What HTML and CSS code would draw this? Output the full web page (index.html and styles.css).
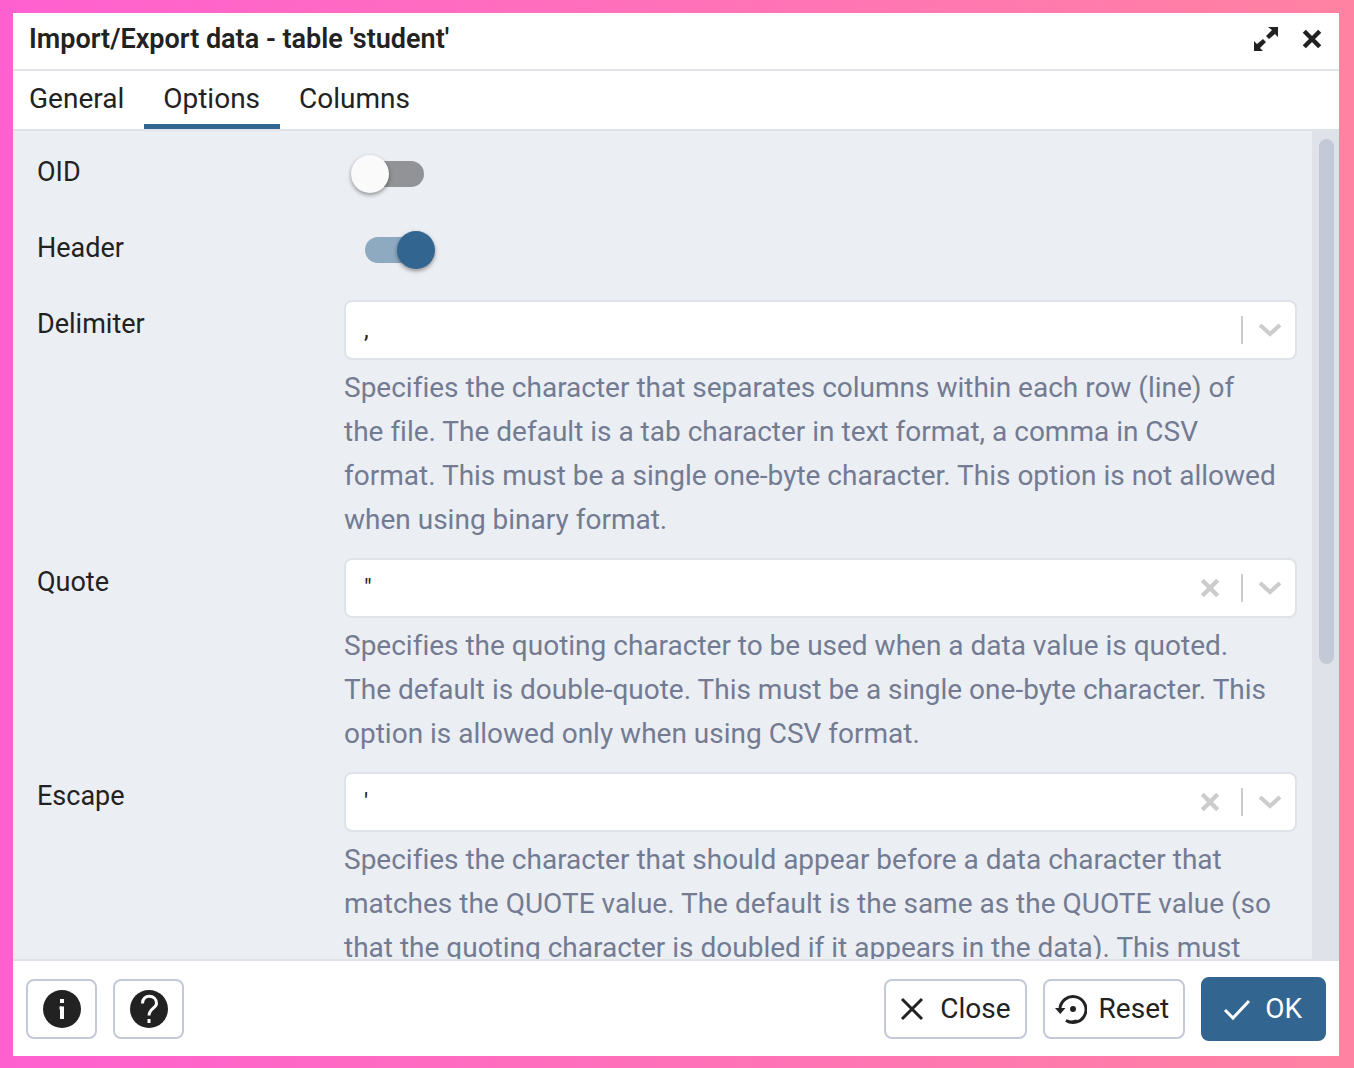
FILE: index.html
```html
<!DOCTYPE html>
<html lang="en">
<head>
<meta charset="utf-8">
<title>Import/Export data - table 'student'</title>
<link rel="stylesheet" href="styles.css">
</head>
<body>
<main class="dialog">
  <header class="titlebar">
    <h1 class="title">Import/Export data - table 'student'</h1>
    <button class="icon-button" type="button" aria-label="Maximize">
      <svg class="icon-expand" viewBox="0 0 26 26" aria-hidden="true"><path class="solid" d="M15 1h10v10l-3-3-6 5-3-3 6-6zM1 25V15l3 3 6-5 3 3-6 6 3 3z"/></svg>
    </button>
    <button class="icon-button" type="button" aria-label="Close dialog">
      <svg class="icon-x" viewBox="0 0 20 20" aria-hidden="true"><path class="thick" d="M3 3l14 14M17 3L3 17"/></svg>
    </button>
  </header>
  <nav class="tabs">
    <a class="tab" href="#general">General</a>
    <a class="tab active" href="#options" aria-current="page">Options</a>
    <a class="tab" href="#columns">Columns</a>
  </nav>
  <div class="body">
    <form class="options" id="options">
      <div class="row switch-row">
        <label class="label" for="oid">OID</label>
        <input class="switch" type="checkbox" id="oid">
      </div>
      <div class="row switch-row">
        <label class="label" for="header">Header</label>
        <input class="switch" type="checkbox" id="header" checked>
      </div>
      <div class="row">
        <label class="label" for="delimiter">Delimiter</label>
        <div class="field">
          <div class="control">
            <select class="select" id="delimiter"><option>,</option></select>
            <svg class="arrow" viewBox="0 0 24 16" aria-hidden="true"><path d="M2 3l10 9 10-9"/></svg>
          </div>
          <p class="help">Specifies the character that separates columns within each row (line) of<br>the file. The default is a tab character in text format, a comma in CSV<br>format. This must be a single one-byte character. This option is not allowed<br>when using binary format.</p>
        </div>
      </div>
      <div class="row">
        <label class="label" for="quote">Quote</label>
        <div class="field">
          <div class="control">
            <select class="select" id="quote"><option>"</option></select>
            <button class="clear" type="button" aria-label="Clear quote"><svg class="icon-x" viewBox="0 0 20 20" aria-hidden="true"><path class="thick" d="M3 3l14 14M17 3L3 17"/></svg></button>
            <svg class="arrow" viewBox="0 0 24 16" aria-hidden="true"><path d="M2 3l10 9 10-9"/></svg>
          </div>
          <p class="help">Specifies the quoting character to be used when a data value is quoted.<br>The default is double-quote. This must be a single one-byte character. This<br>option is allowed only when using CSV format.</p>
        </div>
      </div>
      <div class="row">
        <label class="label" for="escape">Escape</label>
        <div class="field">
          <div class="control">
            <select class="select" id="escape"><option>'</option></select>
            <button class="clear" type="button" aria-label="Clear escape"><svg class="icon-x" viewBox="0 0 20 20" aria-hidden="true"><path class="thick" d="M3 3l14 14M17 3L3 17"/></svg></button>
            <svg class="arrow" viewBox="0 0 24 16" aria-hidden="true"><path d="M2 3l10 9 10-9"/></svg>
          </div>
          <p class="help">Specifies the character that should appear before a data character that<br>matches the QUOTE value. The default is the same as the QUOTE value (so<br>that the quoting character is doubled if it appears in the data). This must</p>
        </div>
      </div>
    </form>
    <div class="scrollbar" aria-hidden="true"><div class="thumb"></div></div>
  </div>
  <footer class="footer">
    <button class="button square" type="button" aria-label="Information">
      <svg class="icon-round" viewBox="0 0 40 40" aria-hidden="true"><circle class="disc" cx="20" cy="20" r="19"/><path class="mark" d="M20 17.500V30M20 10v4"/><path class="mark thin" d="M17.500 19H20"/></svg>
    </button>
    <button class="button square" type="button" aria-label="Help">
      <svg class="icon-round" viewBox="0 0 40 40" aria-hidden="true"><circle class="disc" cx="20" cy="20" r="19"/><path class="mark thin" d="M13.500 14.500c0-10 14-9.500 14 0 0 4.500-7.500 5-7.500 12M20 30v4"/></svg>
    </button>
    <span class="spacer"></span>
    <button class="button" type="button">
      <svg class="icon-action" viewBox="0 0 32 32" aria-hidden="true"><path d="M6 6l20 20M26 6L6 26"/></svg>Close</button>
    <button class="button" type="button">
      <svg class="icon-action" viewBox="0 0 32 32" aria-hidden="true"><path d="M5 16A13 13 0 1 1 11 27.500Q16 30 22 28"/><path class="solid" d="M0 15h10.500l-5.250 6z"/><circle class="solid" cx="18" cy="16" r="3"/></svg>Reset</button>
    <button class="button primary" type="submit" form="options">
      <svg class="icon-action" viewBox="0 0 32 32" aria-hidden="true"><path d="M4 17l8 8L28 8"/></svg>OK</button>
  </footer>
</main>
</body>
</html>
```
FILE: styles.css
```css
* {
  box-sizing: border-box;
}

body {
  margin: 0;
  height: 100vh;
  padding: 13px 15px 12px 13px;
  background: linear-gradient(90deg, #ff60d0, #ff82a2);
  color: #222;
  font: 28px/32px Roboto, sans-serif;
  font-variant-ligatures: none;
}

.dialog {
  display: flex;
  flex-direction: column;
  height: 100%;
  background: #fff;
}

.titlebar {
  display: flex;
  align-items: center;
  gap: 22px;
  height: 58px;
  padding: 0 16px 4px;
  border-bottom: 2px solid #e2e4ea;
}

.title {
  flex: 1;
  margin: 0;
  font-size: 27px;
  font-weight: 600;
}

.icon-button,
.clear {
  display: flex;
  padding: 0;
  border: 0;
  background: none;
  color: inherit;
}

svg {
  flex: none;
  fill: none;
  stroke: currentColor;
  stroke-width: 3;
}

.solid {
  fill: currentColor;
  stroke: none;
}

.thick {
  stroke-width: 4;
}

.icon-expand {
  width: 26px;
  height: 26px;
}

.icon-x {
  width: 22px;
  height: 22px;
}

.tabs {
  display: flex;
  height: 60px;
  border-bottom: 2px solid #dfe2e8;
}

.tab {
  padding: 12px 20px 0 16px;
  border-bottom: 5px solid transparent;
  color: inherit;
  text-decoration: none;
}

.tab + .tab {
  padding-left: 19px;
}

.tab.active {
  border-color: #326690;
}

.body {
  display: flex;
  flex: 1;
  min-height: 0;
}

.options {
  flex: 1;
  padding: 17px 15px 0 24px;
  overflow: hidden;
  background: #ebeef3;
}

.scrollbar {
  width: 27px;
  padding: 8px 5px 0 7px;
  background: #dfe2e9;
}

.thumb {
  height: 64%;
  border-radius: 8px;
  background: #c4c9d7;
}

.row {
  display: grid;
  grid-template-columns: 307px 1fr;
  align-items: start;
  margin-bottom: 16px;
}

.switch-row {
  min-height: 60px;
}

.label {
  padding-top: 8px;
  font-size: 27px;
}

.switch {
  appearance: none;
  display: grid;
  align-items: center;
  width: 84px;
  height: 38px;
  margin: 7px;
}

.switch::before,
.switch::after {
  content: "";
  grid-area: 1 / 1;
}

.switch::before {
  height: 26px;
  margin: 0 11px 0 14px;
  border-radius: 13px;
  background: #929396;
}

.switch::after {
  width: 38px;
  height: 38px;
  border-radius: 50%;
  background: #fafafa;
  box-shadow: 0 2px 4px rgba(0, 0, 0, 0.4);
}

.switch:checked::before {
  background: #8eaac1;
}

.switch:checked::after {
  justify-self: end;
  background: #326690;
}

.control {
  display: grid;
  grid-template-columns: 1fr 42px 56px;
  align-items: center;
  color: #ccc;
}

.select {
  grid-area: 1 / 1 / 2 / 4;
  appearance: none;
  width: 100%;
  height: 60px;
  padding: 0 18px;
  border: 2px solid #dfe2e8;
  border-radius: 8px;
  background: #fff;
  color: #222;
  font: inherit;
  font-size: 24px;
}

.clear {
  grid-area: 1 / 2;
  z-index: 1;
}

.arrow {
  grid-area: 1 / 3;
  z-index: 1;
  width: 56px;
  height: 28px;
  padding: 6px 15px;
  border-left: 2px solid #ccc;
  stroke-width: 4;
  pointer-events: none;
}

.help {
  margin: 6px 0 0;
  color: #737b92;
  line-height: 44px;
}

.footer {
  display: flex;
  align-items: center;
  gap: 16px;
  height: 97px;
  padding: 0 13px;
  border-top: 2px solid #dfe2e8;
}

.spacer {
  flex: 1;
}

.button {
  display: flex;
  align-items: center;
  gap: 12px;
  height: 60px;
  padding: 0 14px 0 10px;
  border: 2px solid #c4c9d7;
  border-radius: 8px;
  background: #fff;
  color: #222;
  font: inherit;
}

.square {
  justify-content: center;
  width: 71px;
  padding: 0;
}

.primary {
  height: 64px;
  padding: 0 22px 0 18px;
  border-color: #326690;
  background: #326690;
  color: #fff;
}

.icon-round {
  width: 40px;
  height: 40px;
}

.disc {
  fill: #222;
  stroke: none;
}

.mark {
  stroke: #fff;
  stroke-width: 4;
}

.thin {
  stroke-width: 3;
}

.icon-action {
  width: 32px;
  height: 32px;
}
```
